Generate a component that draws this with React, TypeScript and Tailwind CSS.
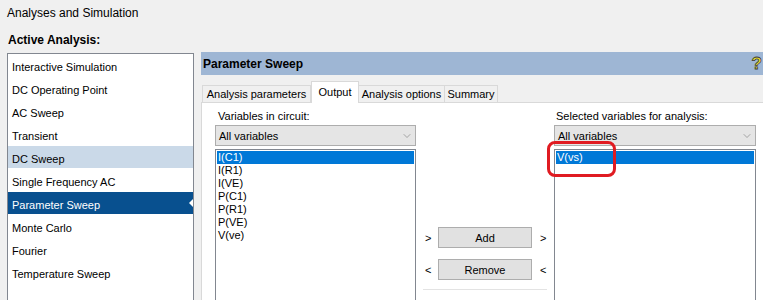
import { ChevronDown } from "lucide-react";

const analyses = [
  "Interactive Simulation",
  "DC Operating Point",
  "AC Sweep",
  "Transient",
  "DC Sweep",
  "Single Frequency AC",
  "Parameter Sweep",
  "Monte Carlo",
  "Fourier",
  "Temperature Sweep",
];

const circuitVars = ["I(C1)", "I(R1)", "I(VE)", "P(C1)", "P(R1)", "P(VE)", "V(ve)"];
const selectedVars = ["V(vs)"];

const tabs = [
  { label: "Analysis parameters", width: "w-[109px]" },
  { label: "Output", width: "w-[48px]", active: true },
  { label: "Analysis options", width: "w-[87px]" },
  { label: "Summary", width: "w-[54px]" },
];

function Dropdown() {
  return (
    <div className="flex h-[21px] items-center justify-between border border-[#adadad] bg-[#e5e5e5] pl-[3px] pr-[2px]">
      <span>All variables</span>
      <ChevronDown size={12} strokeWidth={1} className="text-[#606060]" />
    </div>
  );
}

function VarList({ items }: { items: string[] }) {
  return (
    <div className="mt-[3px] h-[160px] border border-[#828790] bg-white p-px">
      {items.map((item, i) => (
        <div
          key={item}
          className={
            i === 0
              ? "h-[13px] bg-[#0078d7] pl-[1px] leading-[13px] text-white"
              : "h-[13px] pl-[1px] leading-[13px]"
          }
        >
          {item}
        </div>
      ))}
    </div>
  );
}

export default function App() {
  return (
    <div className="relative h-[300px] w-[763px] overflow-hidden bg-[#f0f0f0] font-['Liberation_Sans',Arial,sans-serif] text-[11px] leading-[14px] text-black">
      <div className="h-[27px] pl-[7px] pt-[6px] text-[12px]">Analyses and Simulation</div>
      <div className="h-[25px] pl-[8px] pt-[6px] text-[12px] font-bold">Active Analysis:</div>

      <div className="flex">
        {/* analysis type list */}
        <ul className="ml-[7px] mt-px h-[260px] w-[187px] shrink-0 border border-[#828790] bg-white">
          {analyses.map((name) => {
            const active = name === "Parameter Sweep";
            const soft = name === "DC Sweep";
            return (
              <li
                key={name}
                className={
                  active
                    ? "relative mb-px h-[22px] bg-[#08508f] pl-[4px] pt-[6px] text-white"
                    : soft
                    ? "mb-px h-[22px] bg-[#cad9e8] pl-[4px] pt-[6px]"
                    : "mb-px h-[22px] pl-[4px] pt-[6px]"
                }
              >
                {name}
                {active && (
                  <span className="absolute right-0 top-[7px] h-0 w-0 border-y-[4px] border-r-[4px] border-y-transparent border-r-white" />
                )}
              </li>
            );
          })}
        </ul>

        {/* settings panel */}
        <div className="ml-[7px] flex-1">
          <div className="flex h-[23px] items-center justify-between bg-[#9eb6d4] pl-[2px] pr-[1px]">
            <span className="text-[12px] font-bold">Parameter Sweep</span>
            <span className="text-[17px] font-bold leading-[17px] text-[#f2e52c] [-webkit-text-stroke:0.8px_#3a3a3a]">?</span>
          </div>

          <div className="flex h-[27px] items-end pl-[1px]">
            {tabs.map((t) =>
              t.active ? (
                <div
                  key={t.label}
                  className={`${t.width} relative z-10 -mb-px flex h-[22px] justify-center border border-b-0 border-[#d9d9d9] bg-white pt-[3px]`}
                >
                  {t.label}
                </div>
              ) : (
                <div
                  key={t.label}
                  className={`${t.width} -ml-px flex h-[17px] justify-center border border-b-0 border-[#d9d9d9] pt-px first:ml-0`}
                >
                  {t.label}
                </div>
              )
            )}
          </div>

          <div className="flex h-[200px] border-l border-t border-[#d9d9d9] bg-white pt-[5px]">
            <div className="ml-[13px] w-[201px]">
              <div className="h-[17px] pl-[3px] pt-[1px]">Variables in circuit:</div>
              <Dropdown />
              <VarList items={circuitVars} />
            </div>

            <div className="w-[138px] pt-[119px]">
              <div className="flex h-[21px] items-center">
                <span className="w-[22px] pl-[9px]">&gt;</span>
                <button className="h-[21px] w-[94px] border border-[#adadad] bg-[#e1e1e1]">Add</button>
                <span className="pl-[8px]">&gt;</span>
              </div>
              <div className="mt-[11px] flex h-[21px] items-center">
                <span className="w-[22px] pl-[9px]">&lt;</span>
                <button className="h-[21px] w-[94px] border border-[#adadad] bg-[#e1e1e1]">Remove</button>
                <span className="pl-[8px]">&lt;</span>
              </div>
              <div className="ml-[7px] mt-[9px] h-px w-[124px] bg-[#e3e3e3]" />
            </div>

            <div className="w-[202px]">
              <div className="h-[17px] pl-[2px] pt-[1px]">Selected variables for analysis:</div>
              <Dropdown />
              <VarList items={selectedVars} />
            </div>
          </div>
        </div>
      </div>

      {/* red annotation marker */}
      <div className="absolute left-[547px] top-[141px] h-[36px] w-[69px] rounded-[8px] border-[3px] border-[#e01b22]" />
    </div>
  );
}
